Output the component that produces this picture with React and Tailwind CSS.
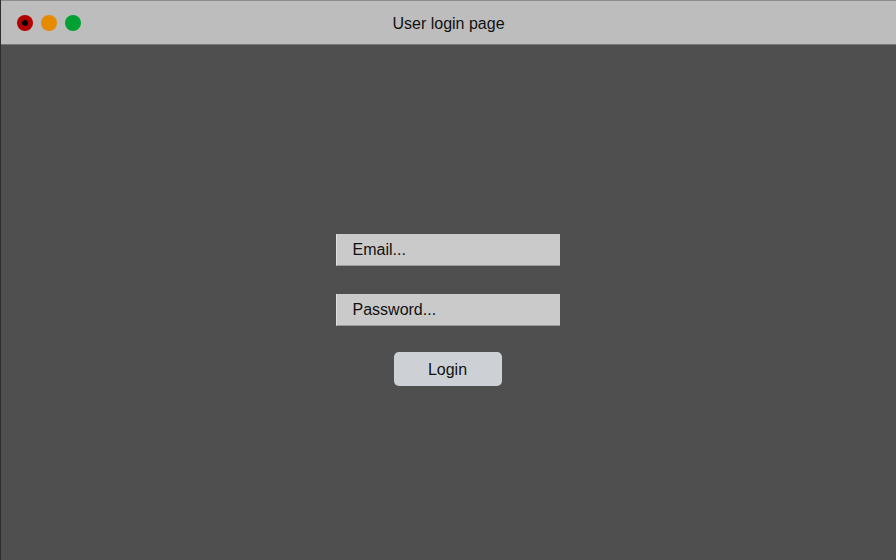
export default function App() {
  return (
    <div className="flex h-[560px] w-[896px] flex-col overflow-hidden border-l border-[#2e2e2e] bg-[#4f4f4f] font-['Liberation_Sans',Arial,sans-serif]">
      <div className="relative flex h-[45px] shrink-0 items-center justify-center border-t border-b border-t-[#8c8c8c] border-b-[#777777] bg-[#bdbdbd] pt-[2px]">
        <div className="absolute left-[16px] top-[14px] flex gap-[8px]">
          <div className="flex h-4 w-4 items-center justify-center rounded-full bg-[#b30000]">
            <div className="h-[6px] w-[6px] rounded-full bg-black" />
          </div>
          <div className="h-4 w-4 rounded-full bg-[#e68a00]" />
          <div className="h-4 w-4 rounded-full bg-[#00a032]" />
        </div>
        <span className="text-[16px] text-[#111]">User login page</span>
      </div>
      <div className="flex flex-1 flex-col items-center pt-[189px] pr-[2px]">
        <input
          placeholder="Email..."
          className="h-[32px] w-[224px] border-l border-b border-l-[#e0e0e0] border-b-[#9a9a9a] bg-[#cacaca] px-[16px] pt-[1px] text-[16px] text-[#111] outline-none placeholder:text-[#111]"
        />
        <input
          type="password"
          placeholder="Password..."
          className="mt-[28px] h-[32px] w-[224px] border-l border-b border-l-[#e0e0e0] border-b-[#9a9a9a] bg-[#cacaca] px-[16px] pt-[1px] text-[16px] text-[#111] outline-none placeholder:text-[#111]"
        />
        <button className="mt-[26px] h-[34px] w-[108px] rounded-[5px] bg-[#cdd1d6] pt-[1px] text-[16px] text-[#111]">
          Login
        </button>
      </div>
    </div>
  );
}
